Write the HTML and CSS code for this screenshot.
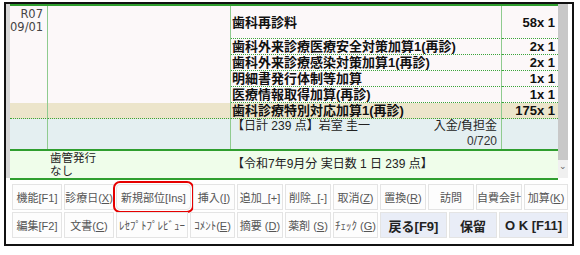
FILE: index.html
```html
<!DOCTYPE html>
<html lang="ja">
<head>
    <meta charset="UTF-8">
    <title>診療行為入力</title>
    <link rel="stylesheet" href="styles.css">
</head>
<body>
    <div class="window">
        <div class="upper">
            <div class="edge"></div>
            <div class="sheet">
                <!-- 診療行為の明細 -->
                <div class="row first">
                    <div class="cell date">R07<br>09/01</div>
                    <div class="cell blank"></div>
                    <div class="cell name">歯科再診料</div>
                    <div class="cell qty">58x 1</div>
                </div>
                <div class="row">
                    <div class="cell date"></div>
                    <div class="cell blank"></div>
                    <div class="cell name">歯科外来診療医療安全対策加算1(再診)</div>
                    <div class="cell qty">2x 1</div>
                </div>
                <div class="row">
                    <div class="cell date"></div>
                    <div class="cell blank"></div>
                    <div class="cell name">歯科外来診療感染対策加算1(再診)</div>
                    <div class="cell qty">2x 1</div>
                </div>
                <div class="row">
                    <div class="cell date"></div>
                    <div class="cell blank"></div>
                    <div class="cell name">明細書発行体制等加算</div>
                    <div class="cell qty">1x 1</div>
                </div>
                <div class="row">
                    <div class="cell date"></div>
                    <div class="cell blank"></div>
                    <div class="cell name">医療情報取得加算(再診)</div>
                    <div class="cell qty">1x 1</div>
                </div>
                <div class="row selected last">
                    <div class="cell date"></div>
                    <div class="cell blank"></div>
                    <div class="cell name">歯科診療特別対応加算1(再診)</div>
                    <div class="cell qty">175x 1</div>
                </div>

                <!-- 日計 -->
                <div class="row total">
                    <div class="cell date"></div>
                    <div class="cell blank"></div>
                    <div class="cell name">
                        <div class="total-line">
                            <span>【日計 239 点】岩室 圭一</span>
                            <span>入金/負担金</span>
                        </div>
                        <div class="total-line right">0/720</div>
                    </div>
                    <div class="cell qty"></div>
                </div>

                <!-- 月計 -->
                <div class="month">
                    <div class="note">歯管発行<br>なし</div>
                    <div class="sum">【令和7年9月分 実日数 1 日 239 点】</div>
                </div>
            </div>
            <div class="scroll">
                <div class="thumb"></div>
                <div class="arrow">&#x2304;</div>
            </div>
        </div>

        <!-- ファンクションキー -->
        <div class="keys">
            <div class="key-row">
                <button class="key w50">機能[F1]</button>
                <button class="key w50">診療日(<u>X</u>)</button>
                <button class="key w75 marked">新規部位[Ins]</button>
                <button class="key w42">挿入(<u>I</u>)</button>
                <button class="key w46">追加_[+]</button>
                <button class="key w46">削除_[-]</button>
                <button class="key w45">取消(<u>Z</u>)</button>
                <button class="key w46">置換(<u>R</u>)</button>
                <button class="key w46">訪問</button>
                <button class="key w46">自費会計</button>
                <button class="key w44">加算(<u>K</u>)</button>
            </div>
            <div class="key-row">
                <button class="key w50">編集[F2]</button>
                <button class="key w50">文書(<u>C</u>)</button>
                <button class="key w72">ﾚｾﾌﾟﾄﾌﾟﾚﾋﾞｭｰ</button>
                <button class="key w45">ｺﾒﾝﾄ(<u>E</u>)</button>
                <button class="key w46">摘要 (<u>D</u>)</button>
                <button class="key w46">薬剤 (<u>S</u>)</button>
                <button class="key w45">ﾁｪｯｸ (<u>G</u>)</button>
                <button class="key big w67">戻る[F9]</button>
                <button class="key big w48">保留</button>
                <button class="key big w69">O K [F11]</button>
            </div>
        </div>
    </div>
</body>
</html>
```

FILE: styles.css
```css
/* 全体 */
* {
    margin: 0;
    padding: 0;
    box-sizing: border-box;
}

body {
    background: #ffffff;
    font-family: "Liberation Sans", "Noto Sans CJK JP", sans-serif;
    color: #111;
}

/* 外枠 */
.window {
    margin: 2px 0 0 4px;
    width: 570px;
    height: 244px;
    border: 2px solid #111;
    background: #ffffff;
}

/* 上段: 明細 + スクロールバー */
.upper {
    display: flex;
    height: 174px;
}

.edge {
    width: 4px;
    background: #d6d6d6;
}

.sheet {
    width: 548px;
    border-top: 2px solid #2f9e2f;
    background: #fcf8f9;
}

.row {
    display: flex;
    height: 16px;
}

.row.first {
    height: 33px;
}

.cell {
    border-right: 1px solid #8fcb8f;
    font-size: 13px;
    line-height: 15px;
    white-space: nowrap;
}

.cell.date {
    width: 38px;
    text-align: right;
    padding: 2px 4px 0 0;
    font-family: "DejaVu Sans", sans-serif;
    font-size: 11.5px;
    line-height: 13px;
    color: #444;
}

.cell.blank {
    width: 183px;
}

.cell.name {
    width: 271px;
    padding-left: 1px;
    font-weight: 600;
    border-bottom: 1px dotted #3aa53a;
}

.cell.qty {
    width: 56px;
    border-right: none;
    text-align: right;
    padding-right: 3px;
    font-weight: 600;
    border-bottom: 1px dotted #3aa53a;
}

.row.first .cell.name,
.row.first .cell.qty {
    display: flex;
    align-items: center;
}

.row.first .cell.qty {
    justify-content: flex-end;
}

.row.last .cell {
    border-bottom: 1px dotted #3aa53a;
}

.row.selected {
    background: #ece5cb;
}

/* 日計 */
.row.total {
    height: 30px;
    background: #e4eff1;
}

.row.total .cell {
    border-bottom: none;
}

.row.total .cell.name {
    font-weight: normal;
    font-size: 12px;
    line-height: 15px;
    padding-right: 4px;
    color: #222;
}

.total-line {
    display: flex;
    justify-content: space-between;
}

.total-line.right {
    justify-content: flex-end;
    color: #333;
}

/* 月計 */
.month {
    display: grid;
    grid-template-columns: 38px 183px 1fr;
    height: 31px;
    border-top: 2px solid #2f9e2f;
    border-bottom: 2px solid #2f9e2f;
    background: #effdea;
    font-size: 12px;
    color: #222;
}

.month .note {
    grid-column: 2;
    font-size: 11.5px;
    line-height: 13px;
    padding: 1px 0 0 2px;
}

.month .sum {
    grid-column: 3;
    line-height: 27px;
    padding-left: 1px;
}

/* スクロールバー */
.scroll {
    width: 10px;
    margin-right: 4px;
    background: #f0f0f0;
    display: flex;
    flex-direction: column;
}

.thumb {
    height: 156px;
    background: #c8c8c8;
}

.arrow {
    font-size: 9px;
    line-height: 12px;
    text-align: center;
    color: #666;
}

/* ボタン */
.keys {
    padding: 6px 0 0 6px;
    display: flex;
    flex-direction: column;
    gap: 2px;
}

.key-row {
    display: flex;
    gap: 2px;
    height: 26px;
}

.key {
    height: 26px;
    background: #fdfdfd;
    border: 1px solid #e4e4e4;
    font-family: "Liberation Sans", "Noto Sans CJK JP", sans-serif;
    font-size: 11px;
    color: #555;
    white-space: nowrap;
    padding: 0;
    overflow: visible;
}

.key u {
    text-underline-offset: 1px;
}

.key.marked {
    outline: 2px solid #e60000;
    outline-offset: 1px;
    border-radius: 4px;
}

.key.big {
    background: #e9edf7;
    font-size: 13px;
    font-weight: bold;
    color: #222;
}

.w42 { width: 42px; }
.w44 { width: 44px; }
.w45 { width: 45px; }
.w46 { width: 46px; }
.w48 { width: 48px; }
.w50 { width: 50px; }
.w67 { width: 67px; }
.w69 { width: 69px; }
.w72 { width: 72px; }
.w75 { width: 75px; }
```
